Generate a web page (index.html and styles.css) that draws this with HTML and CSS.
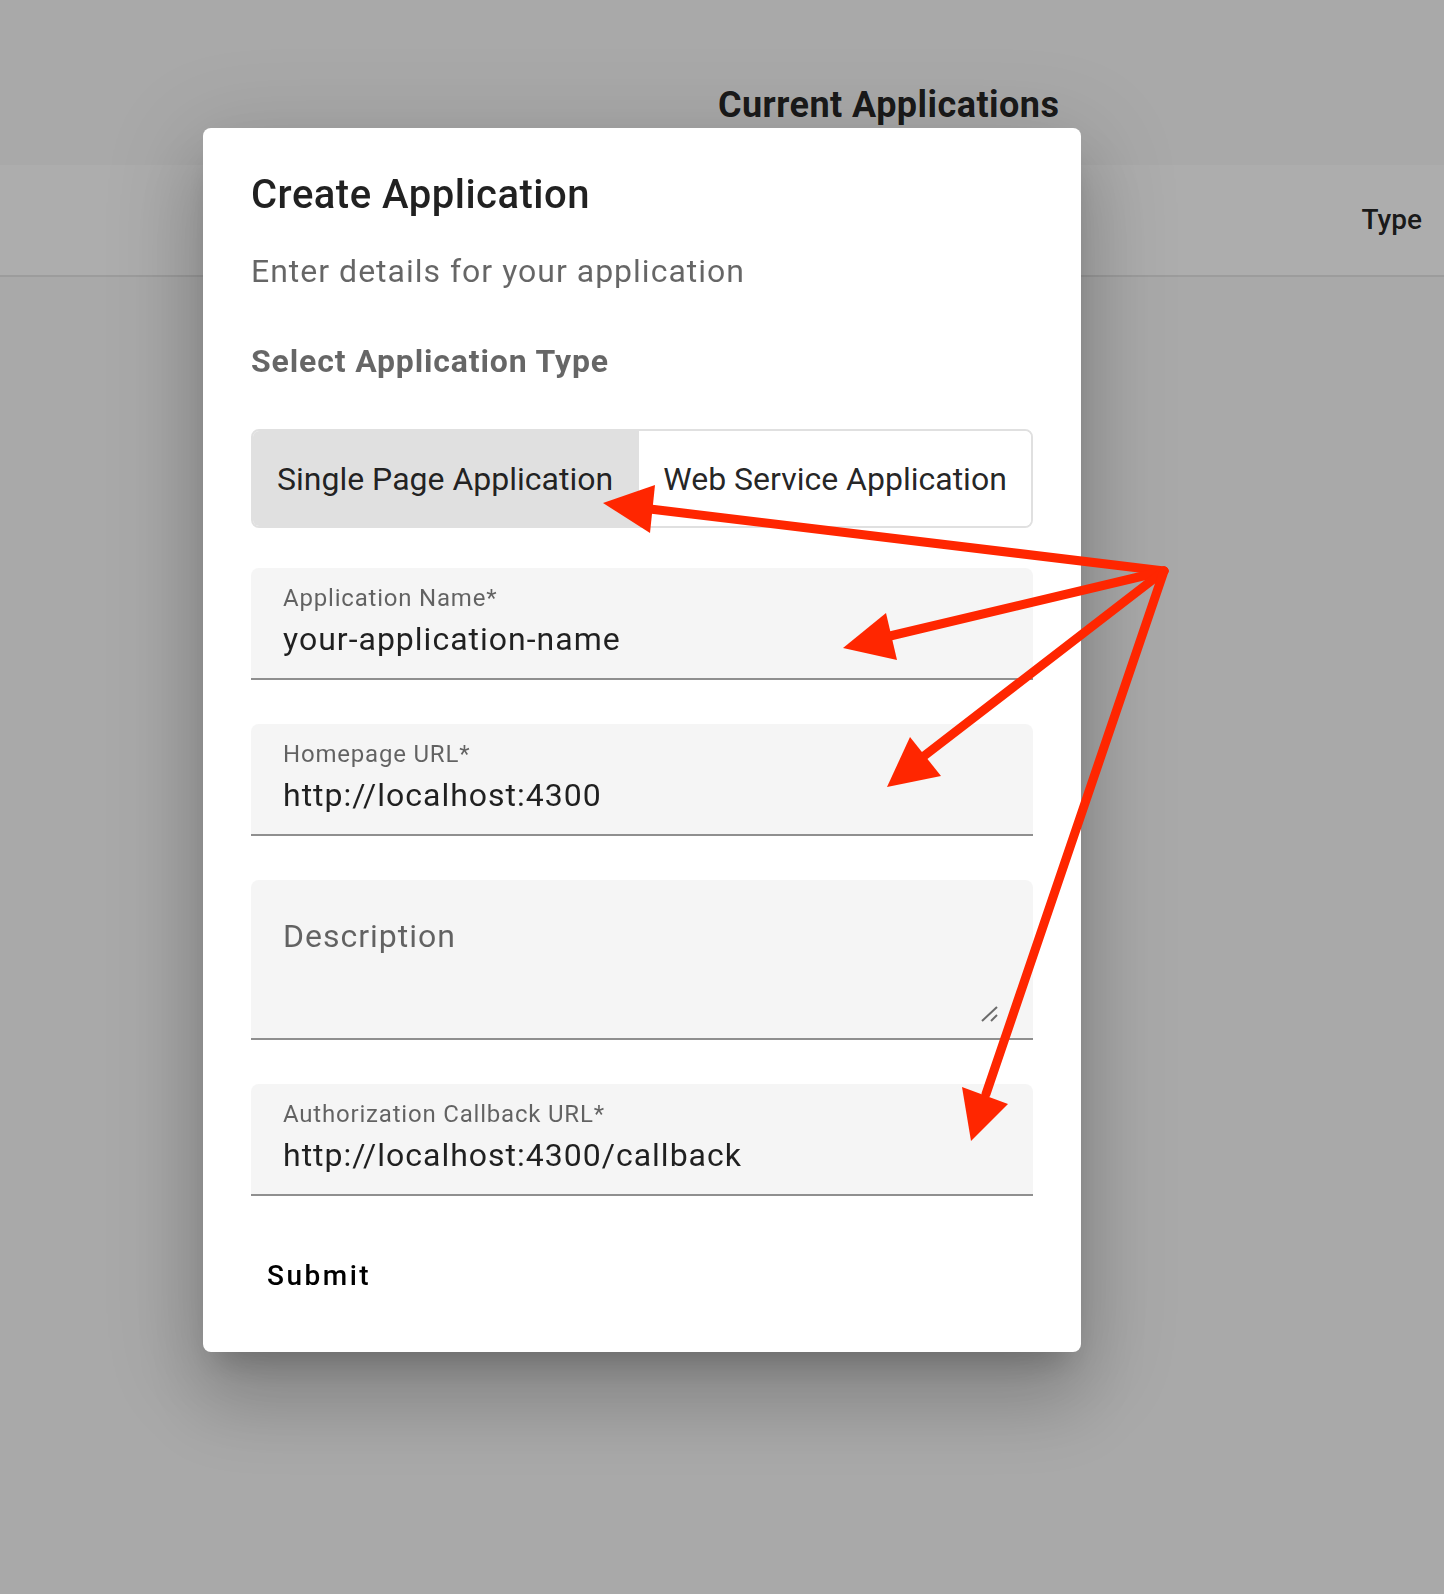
FILE: index.html
```html
<!DOCTYPE html>
<html lang="en">
<head>
<meta charset="utf-8">
<title>Create Application</title>
<link rel="stylesheet" href="styles.css">
</head>
<body>
<main class="page">
  <h2 class="page-title">Current Applications</h2>
  <div class="table-head">
    <span class="th">Type</span>
  </div>
</main>

<div class="backdrop"></div>

<section class="dialog" role="dialog" aria-labelledby="dlg-title">
  <h1 class="dialog-title" id="dlg-title">Create Application</h1>
  <p class="dialog-sub">Enter details for your application</p>
  <h3 class="section-title">Select Application Type</h3>

  <div class="toggle-group">
    <button class="toggle selected" type="button">Single Page Application</button>
    <button class="toggle" type="button">Web Service Application</button>
  </div>

  <form class="form">
    <div class="field">
      <label class="field-label" for="f-name">Application Name*</label>
      <input class="field-input" id="f-name" type="text" value="your-application-name">
    </div>
    <div class="field">
      <label class="field-label" for="f-home">Homepage URL*</label>
      <input class="field-input" id="f-home" type="text" value="http://localhost:4300">
    </div>
    <div class="field field-area">
      <textarea class="field-textarea" placeholder="Description"></textarea>
      <svg class="grip" width="18" height="16" viewBox="0 0 18 16" aria-hidden="true">
        <path d="M1 15 L16 1" stroke="#6b6b6b" stroke-width="2" fill="none"/>
        <path d="M10 15 L16 9" stroke="#6b6b6b" stroke-width="2" fill="none"/>
      </svg>
    </div>
    <div class="field">
      <label class="field-label" for="f-cb">Authorization Callback URL*</label>
      <input class="field-input" id="f-cb" type="text" value="http://localhost:4300/callback">
    </div>
    <div class="actions">
      <button class="text-btn" type="button">Submit</button>
    </div>
  </form>
</section>

<svg class="annotations" width="1444" height="1594" viewBox="0 0 1444 1594" aria-hidden="true">
  <g stroke="#ff2600" stroke-width="9" stroke-linecap="round" fill="none">
    <line x1="1164" y1="571" x2="650" y2="509"/>
    <line x1="1164" y1="571" x2="890" y2="636"/>
    <line x1="1164" y1="571" x2="924" y2="756"/>
    <line x1="1164" y1="571" x2="986" y2="1094"/>
  </g>
  <g fill="#ff2600">
    <polygon points="603,503 655,485 650,533"/>
    <polygon points="843,648 886,613 897,660"/>
    <polygon points="887,787 910,737 941,776"/>
    <polygon points="971,1141 962,1087 1008,1104"/>
  </g>
</svg>
</body>
</html>
```

FILE: styles.css
```css
* {
  box-sizing: border-box;
}

html, body {
  margin: 0;
  padding: 0;
}

body {
  width: 1444px;
  height: 1594px;
  overflow: hidden;
  background: #fafafa;
  font-family: Roboto, "Noto Sans", "Liberation Sans", sans-serif;
  color: rgba(0, 0, 0, 0.87);
  position: relative;
}

/* ---------- page behind the dialog ---------- */
.page {
  display: flex;
  flex-direction: column;
}

.page-title {
  margin: 81px 0 36px 718px;
  font-size: 36px;
  line-height: 48px;
  font-weight: 700;
  letter-spacing: 0.45px;
  color: rgba(0, 0, 0, 0.87);
}

.table-head {
  height: 112px;
  background: #ffffff;
  border-bottom: 2px solid #e6e6e6;
  display: flex;
  justify-content: flex-end;
  align-items: center;
  padding-right: 22px;
}

.th {
  font-size: 28px;
  font-weight: 500;
  line-height: 40px;
  color: rgba(0, 0, 0, 0.87);
}

.backdrop {
  position: fixed;
  inset: 0;
  background: rgba(0, 0, 0, 0.32);
}

/* ---------- dialog ---------- */
.dialog {
  position: absolute;
  left: 203px;
  top: 128px;
  width: 878px;
  height: 1224px;
  background: #ffffff;
  border-radius: 8px;
  padding: 43px 48px 40px;
  box-shadow:
    0 22px 30px -14px rgba(0, 0, 0, 0.2),
    0 48px 76px 6px rgba(0, 0, 0, 0.14),
    0 18px 92px 16px rgba(0, 0, 0, 0.12);
  display: flex;
  flex-direction: column;
}

.dialog-title {
  margin: 0;
  font-size: 40px;
  line-height: 48px;
  font-weight: 500;
  letter-spacing: 0.5px;
  color: rgba(0, 0, 0, 0.87);
}

.dialog-sub {
  margin: 28px 0 0;
  font-size: 32px;
  line-height: 48px;
  font-weight: 400;
  color: rgba(0, 0, 0, 0.6);
  letter-spacing: 1px;
}

.section-title {
  margin: 42px 0 0;
  font-size: 32px;
  line-height: 48px;
  font-weight: 700;
  letter-spacing: 0.85px;
  color: rgba(0, 0, 0, 0.6);
}

/* ---------- toggle group ---------- */
.toggle-group {
  margin-top: 44px;
  display: flex;
  border: 2px solid #e0e0e0;
  border-radius: 8px;
  overflow: hidden;
}

.toggle {
  flex: 1 1 auto;
  margin: 0;
  border: 0;
  padding: 0 24px;
  height: 96px;
  line-height: 96px;
  background: #ffffff;
  font-family: inherit;
  font-size: 32px;
  font-weight: 400;
  color: rgba(0, 0, 0, 0.87);
  text-align: left;
  white-space: nowrap;
}

.toggle + .toggle {
  border-left: 2px solid #e0e0e0;
}

.toggle.selected {
  background: #e0e0e0;
}

/* ---------- form fields ---------- */
.form {
  margin-top: 40px;
  display: flex;
  flex-direction: column;
  gap: 44px;
}

.field {
  position: relative;
  display: flex;
  flex-direction: column;
  background: #f5f5f5;
  border-radius: 8px 8px 0 0;
  border-bottom: 2px solid #8f8f8f;
  padding: 14px 32px 15px;
  height: 112px;
}

.field-label {
  font-size: 24px;
  line-height: 32px;
  color: rgba(0, 0, 0, 0.6);
  letter-spacing: 0.8px;
}

.field-input {
  margin: 1px 0 0;
  padding: 0;
  border: 0;
  outline: none;
  background: transparent;
  height: 48px;
  width: 100%;
  font-family: inherit;
  font-size: 32px;
  line-height: 48px;
  color: rgba(0, 0, 0, 0.87);
  letter-spacing: 1px;
}

.field-area {
  height: 160px;
  padding: 32px 32px 14px;
}

.field-textarea {
  display: block;
  margin: 0;
  padding: 0;
  border: 0;
  outline: none;
  resize: none;
  background: transparent;
  width: 100%;
  height: 112px;
  font-family: inherit;
  font-size: 32px;
  line-height: 48px;
  color: rgba(0, 0, 0, 0.87);
  letter-spacing: 1px;
}

.field-textarea::placeholder {
  color: rgba(0, 0, 0, 0.6);
  opacity: 1;
}

.grip {
  position: absolute;
  right: 34px;
  bottom: 16px;
}

/* ---------- actions ---------- */
.actions {
  display: flex;
}

.text-btn {
  margin: 0;
  border: 0;
  background: transparent;
  height: 72px;
  padding: 0 16px;
  font-family: inherit;
  font-size: 28px;
  line-height: 72px;
  font-weight: 500;
  letter-spacing: 2.5px;
  color: #000000;
}

/* ---------- annotation overlay ---------- */
.annotations {
  position: absolute;
  left: 0;
  top: 0;
  pointer-events: none;
}
```
